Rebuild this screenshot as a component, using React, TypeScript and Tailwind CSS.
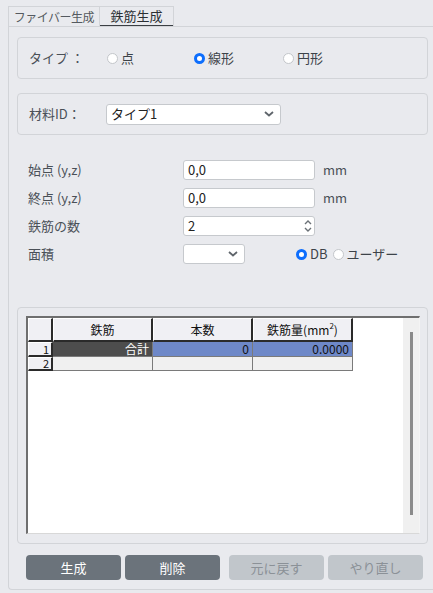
import React from "react";

const font = { fontFamily: '"Segoe UI", "Noto Sans CJK JP", "Noto Sans", sans-serif' };

const Radio: React.FC<{ checked?: boolean; label: string }> = ({ checked, label }) => (
  <label className="flex items-center gap-[3px] text-[13px] text-[#3d4349] whitespace-nowrap">
    {checked ? (
      <span className="w-[11px] h-[11px] rounded-full border-[3px] border-[#0d6efd] bg-white box-border" />
    ) : (
      <span className="w-[11px] h-[11px] rounded-full border border-[#c3c6ca] bg-white box-border" />
    )}
    <span>{label}</span>
  </label>
);

const Chevron: React.FC = () => (
  <svg width="10" height="6" viewBox="0 0 10 6">
    <path d="M1 1l4 3.5L9 1" fill="none" stroke="#5f656b" strokeWidth="1.8" />
  </svg>
);

const TextInput: React.FC<{ value: string; spin?: boolean }> = ({ value, spin }) => (
  <div className="w-[132px] h-[20px] bg-white border border-[#c6c9cd] rounded-[3px] flex items-center pl-[4px] pr-[2px] text-[13px] text-[#222]">
    <span className="flex-1">{value}</span>
    {spin && (
      <svg width="8" height="14" viewBox="0 0 8 14">
        <path d="M1 5l3-3 3 3M1 9l3 3 3-3" fill="none" stroke="#6a7076" strokeWidth="1.4" />
      </svg>
    )}
  </div>
);

const headCell =
  "h-[24px] flex items-center justify-center bg-[#f0f0f4] border-t border-l border-t-white border-l-white border-r-2 border-b-2 border-r-[#2a2a2a] border-b-[#2a2a2a] box-border";

const rowHead =
  "w-[25px] h-full bg-[#f0f0f4] border-t border-l border-white border-r-2 border-b-2 border-r-[#2a2a2a] border-b-[#2a2a2a] box-border flex items-center justify-end pr-[2px] text-[11px] leading-none";

const dataCell = "w-[100px] h-full border-r border-b border-[#7a7a7a] box-border flex items-center justify-end pr-[3px]";

export default function App() {
  return (
    <div className="w-[433px] h-[593px] bg-[#e9eaee] overflow-hidden relative" style={font}>
      {/* tabs */}
      <div className="flex pl-[8px] pt-[6px] h-[26px]">
        <div className="w-[92px] h-[20px] border border-b-0 border-[#d2d4d8] flex items-center justify-center text-[12px] tracking-[-0.5px] whitespace-nowrap text-[#555a60]">
          ファイバー生成
        </div>
        <div className="w-[74px] h-[20px] border-t border-r border-[#d2d4d8] flex flex-col items-center justify-between text-[13px] text-[#2b2f33] whitespace-nowrap">
          <span className="leading-[18px]">鉄筋生成</span>
          <span className="w-full h-[2px] bg-[#3b3f44]" />
        </div>
      </div>

      {/* panel */}
      <div className="ml-[8px] h-[564px] border-l border-t border-b border-[#d2d4d8] rounded-bl-[4px] pl-[8px] pr-[5px] pt-[10px] box-border">
        <div className="h-[42px] border border-[#d2d4d8] rounded-[4px] flex items-center pl-[11px] text-[13px] text-[#4a5057]">
          <span className="w-[78px]">タイプ ：</span>
          <div className="w-[87px]"><Radio label="点" /></div>
          <div className="w-[89px]"><Radio checked label="線形" /></div>
          <Radio label="円形" />
        </div>

        <div className="mt-[14px] h-[42px] border border-[#d2d4d8] rounded-[4px] flex items-center pl-[11px] text-[13px] text-[#4a5057]">
          <span className="w-[77px]">材料ID：</span>
          <div className="w-[175px] h-[21px] bg-white border border-[#c6c9cd] rounded-[3px] flex items-center justify-between pl-[4px] pr-[6px] text-[13px] text-[#222]">
            <span>タイプ1</span>
            <Chevron />
          </div>
        </div>

        <div className="mt-[25px] pl-[11px] flex flex-col gap-[8px] text-[13px] text-[#4a5057]">
          <div className="flex items-center">
            <span className="w-[155px]">始点 (y,z)</span>
            <TextInput value="0,0" />
            <span className="ml-[8px]">mm</span>
          </div>
          <div className="flex items-center">
            <span className="w-[155px]">終点 (y,z)</span>
            <TextInput value="0,0" />
            <span className="ml-[8px]">mm</span>
          </div>
          <div className="flex items-center">
            <span className="w-[155px]">鉄筋の数</span>
            <TextInput value="2" spin />
          </div>
          <div className="flex items-center">
            <span className="w-[155px]">面積</span>
            <div className="w-[62px] h-[20px] bg-white border border-[#c6c9cd] rounded-[3px] flex items-center justify-end pr-[6px]">
              <Chevron />
            </div>
            <div className="ml-[51px] flex items-center gap-[5px]">
              <Radio checked label="DB" />
              <Radio label="ユーザー" />
            </div>
          </div>
        </div>

        {/* table section */}
        <div className="mt-[43px] h-[237px] border border-[#d2d4d8] rounded-[4px] pl-[8px] pt-[8px] pr-[7px] box-border">
          <div className="h-[218px] bg-white border-t-2 border-l-2 border-[#6f6f6f] border-r border-r-[#f4f4f4] border-b border-b-[#d8d8d8] flex box-border" style={{ fontFamily: '"Noto Sans CJK JP", sans-serif' }}>
            <div className="flex-1 flex flex-col text-[12px] text-[#111]">
              <div className="flex">
                <div className={headCell + " w-[25px]"} />
                <div className={headCell + " w-[100px]"}>鉄筋</div>
                <div className={headCell + " w-[100px]"}>本数</div>
                <div className={headCell + " w-[100px]"}>
                  鉄筋量(mm<sup className="text-[8px]">2</sup>)
                </div>
              </div>
              <div className="flex h-[15px] leading-none">
                <div className={rowHead}>1</div>
                <div className={dataCell + " bg-[#4d4d4d] text-white"}>合計</div>
                <div className={dataCell + " bg-[#6e88c8]"}>0</div>
                <div className={dataCell + " bg-[#6e88c8]"}>0.0000</div>
              </div>
              <div className="flex h-[14px] leading-none">
                <div className={rowHead}>2</div>
                <div className={dataCell + " bg-[#f0f0f0]"} />
                <div className={dataCell + " bg-[#f0f0f0]"} />
                <div className={dataCell + " bg-[#f0f0f0]"} />
              </div>
            </div>
            <div className="w-[16px] bg-[#f0f0f0] flex justify-center pt-[14px] pb-[18px]">
              <div className="w-[3px] h-full bg-[#8a8a8a]" />
            </div>
          </div>
        </div>

        {/* buttons */}
        <div className="mt-[11px] pl-[9px] flex gap-[4px] text-[13px]">
          <button className="w-[95px] h-[25px] rounded-[4px] bg-[#6b737b] text-white">生成</button>
          <button className="w-[95px] h-[25px] rounded-[4px] bg-[#6b737b] text-white">削除</button>
          <button className="ml-[5px] w-[95px] h-[25px] rounded-[4px] bg-[#c1c6cb] text-[#8b9197]">元に戻す</button>
          <button className="w-[95px] h-[25px] rounded-[4px] bg-[#c1c6cb] text-[#8b9197]">やり直し</button>
        </div>
      </div>
    </div>
  );
}
